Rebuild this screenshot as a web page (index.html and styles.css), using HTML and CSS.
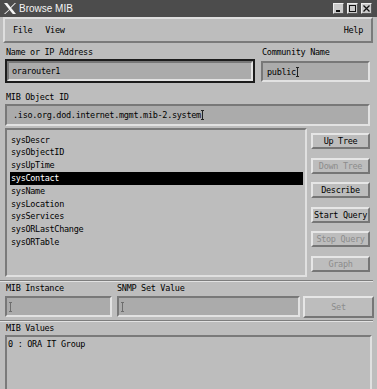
FILE: index.html
```html
<!DOCTYPE html>
<html>
  <head>
    <meta charset="utf-8" />
    <link rel="stylesheet" href="styles.css">
    <title>Browse MIB</title>
  </head>
  <body>
    <div class="titlebar">
      <svg class="xlogo" viewBox="0 0 12 11">
        <polygon points="0,0 3.2,0 12,11 8.8,11" fill="#f4f4f4"/>
        <polygon points="10.8,0 12,0 6.6,5.4 6,4.8" fill="#f4f4f4"/>
        <polygon points="5.2,6.2 5.8,6.8 1.2,11 0,11" fill="#f4f4f4"/>
      </svg>
      <span class="title">Browse MIB</span>
      <div class="wm-buttons">
        <div class="wm-btn">
          <svg viewBox="0 0 9 9"><rect x="2" y="6" width="4" height="2" fill="#111"/></svg>
        </div>
        <div class="wm-btn">
          <svg viewBox="0 0 9 9"><rect x="1.5" y="1.5" width="6" height="6" fill="none" stroke="#111" stroke-width="1"/></svg>
        </div>
        <div class="wm-btn">
          <svg viewBox="0 0 9 9"><path d="M1.5 1.5 L7.5 7.5 M7.5 1.5 L1.5 7.5" stroke="#111" stroke-width="1.3"/></svg>
        </div>
      </div>
    </div>

    <div class="frame">
      <div class="menubar">
        <span>File</span>
        <span>View</span>
        <span class="spacer"></span>
        <span>Help</span>
      </div>

      <div class="panel">
        <div class="fields">
          <div class="col-name">
            <div class="label">Name or IP Address</div>
            <div class="focus">
              <div class="entry entry-name">orarouter1</div>
            </div>
          </div>
          <div class="col-community">
            <div class="label">Community Name</div>
            <div class="entry entry-community">public<span class="caret"></span></div>
          </div>
        </div>

        <div class="label label-oid">MIB Object ID</div>
        <div class="entry entry-oid">.iso.org.dod.internet.mgmt.mib-2.system<span class="caret"></span></div>

        <div class="browser">
          <ul class="list">
            <li>sysDescr</li>
            <li>sysObjectID</li>
            <li>sysUpTime</li>
            <li class="selected">sysContact</li>
            <li>sysName</li>
            <li>sysLocation</li>
            <li>sysServices</li>
            <li>sysORLastChange</li>
            <li>sysORTable</li>
          </ul>
          <div class="buttons">
            <div class="btn">Up Tree</div>
            <div class="btn disabled">Down Tree</div>
            <div class="btn">Describe</div>
            <div class="btn">Start Query</div>
            <div class="btn disabled">Stop Query</div>
            <div class="btn disabled">Graph</div>
          </div>
        </div>

        <div class="groove"></div>

        <div class="setrow">
          <div class="label">MIB Instance</div>
          <div class="label">SNMP Set Value</div>
          <div></div>
          <div class="entry entry-small"><span class="caret dim"></span></div>
          <div class="entry entry-small"><span class="caret dim"></span></div>
          <div class="btn btn-set disabled">Set</div>
        </div>

        <div class="groove groove-2"></div>

        <div class="label">MIB Values</div>
        <div class="values">0 : ORA IT Group</div>
      </div>
    </div>
  </body>
</html>
```

FILE: styles.css
```css
* {
  box-sizing: border-box;
  margin: 0;
  padding: 0;
}
body {
  width: 377px;
  height: 389px;
  overflow: hidden;
  background: #bdbdbd;
  color: #000;
  font-family: "DejaVu Sans Mono", monospace;
  font-size: 8.5px;
  letter-spacing: -0.3px;
}
.titlebar {
  height: 17px;
  background: #4c4c4c;
  color: #f4f4f4;
  display: flex;
  align-items: center;
  padding: 0 5px 0 4px;
  font-family: "Liberation Sans", sans-serif;
  font-size: 10px;
  letter-spacing: 0;
}
.xlogo {
  width: 12px;
  height: 11px;
  margin-right: 3px;
}
.title {
  flex: 1;
}
.wm-buttons {
  display: flex;
  gap: 3px;
}
.wm-btn {
  width: 11px;
  height: 11px;
  background: #cacaca;
  border: 1px solid;
  border-color: #eeeeee #5a5a5a #5a5a5a #eeeeee;
}
.wm-btn svg {
  display: block;
  width: 9px;
  height: 9px;
}
.frame {
  padding: 0 4px 0 3px;
}
.menubar {
  height: 26px;
  display: flex;
  align-items: center;
  gap: 13px;
  padding: 0 8px;
  border: 2px solid;
  border-color: #dedede #7a7a7a #7a7a7a #dedede;
}
.spacer {
  flex: 1;
}
.panel {
  padding: 3px 3px 0 2px;
  display: flex;
  flex-direction: column;
}
.label {
  height: 12px;
  line-height: 12px;
  padding-left: 1px;
  white-space: nowrap;
}
.fields {
  display: flex;
  gap: 6px;
}
.col-name {
  width: 250px;
}
.col-community {
  width: 109px;
}
.focus {
  margin-top: 1px;
  border: 2px solid #1c1c1c;
}
.entry {
  background: #ababab;
  border: 2px solid;
  border-color: #787878 #e2e2e2 #e2e2e2 #787878;
  display: flex;
  align-items: center;
  padding: 0 3px;
  white-space: nowrap;
}
.entry-name {
  height: 20px;
}
.entry-community {
  height: 21px;
  margin-top: 3px;
  padding-left: 4px;
}
.label-oid {
  margin-top: 8px;
}
.entry-oid {
  height: 22px;
  margin-top: 1px;
  padding-left: 6px;
}
.caret {
  display: inline-block;
  width: 3px;
  height: 10px;
  background:
    linear-gradient(#222, #222) center / 1px 100% no-repeat,
    linear-gradient(#222, #222) top / 3px 1px no-repeat,
    linear-gradient(#222, #222) bottom / 3px 1px no-repeat;
}
.caret.dim {
  background:
    linear-gradient(#6e6e6e, #6e6e6e) center / 1px 100% no-repeat,
    linear-gradient(#6e6e6e, #6e6e6e) top / 3px 1px no-repeat,
    linear-gradient(#6e6e6e, #6e6e6e) bottom / 3px 1px no-repeat;
}
.browser {
  display: flex;
  gap: 4px;
  margin-top: 2px;
  height: 149px;
}
.list {
  list-style: none;
  width: 302px;
  border: 2px solid;
  border-color: #7a7a7a #e0e0e0 #e0e0e0 #7a7a7a;
  padding: 3.6px 2px 0 3px;
}
.list li {
  height: 12.8px;
  line-height: 12.8px;
  padding-left: 1px;
}
.list li.selected {
  background: #000;
  color: #fff;
}
.buttons {
  width: 59px;
  display: flex;
  flex-direction: column;
  gap: 8.5px;
  padding-top: 5px;
}
.btn {
  height: 16px;
  display: flex;
  align-items: center;
  justify-content: center;
  white-space: nowrap;
  border: 2px solid;
  border-color: #e6e6e6 #767676 #767676 #e6e6e6;
}
.btn.disabled {
  color: #8c8c8c;
}
.groove {
  height: 2px;
  margin: 3px -3px 0 -5px;
  border-top: 1px solid #7e7e7e;
  border-bottom: 1px solid #e2e2e2;
}
.groove-2 {
  margin-top: 2px;
}
.setrow {
  display: grid;
  grid-template-columns: 107px 183px 69px;
  grid-template-rows: 12px 22px;
  column-gap: 5px;
  row-gap: 2px;
  margin-right: -2px;
}
.setrow .label:nth-child(2) {
  margin-left: -1px;
}
.setrow .btn-set {
  grid-column: 3;
  margin-left: -2px;
  height: 22px;
}
.entry-small {
  height: 21px;
  padding-left: 2px;
}
.values {
  margin: 1px -2px 0 0;
  height: 60px;
  border: 2px solid;
  border-color: #7a7a7a #e0e0e0 #e0e0e0 #7a7a7a;
  padding: 1px 0 0 1px;
  line-height: 12.8px;
}
```
